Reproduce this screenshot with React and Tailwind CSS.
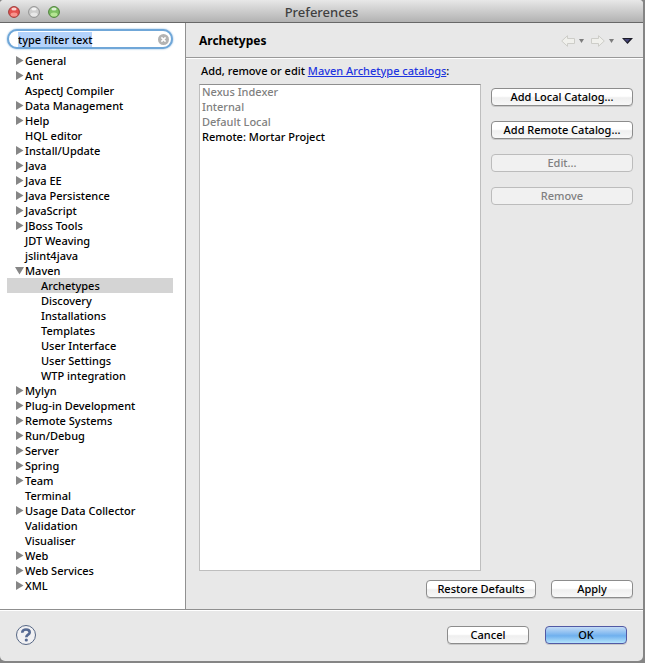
import React, { useEffect, useRef, useState } from "react";

const treeItems = [
    { label: "General", expandable: true },
    { label: "Ant", expandable: true },
    { label: "AspectJ Compiler" },
    { label: "Data Management", expandable: true },
    { label: "Help", expandable: true },
    { label: "HQL editor" },
    { label: "Install/Update", expandable: true },
    { label: "Java", expandable: true },
    { label: "Java EE", expandable: true },
    { label: "Java Persistence", expandable: true },
    { label: "JavaScript", expandable: true },
    { label: "JBoss Tools", expandable: true },
    { label: "JDT Weaving" },
    { label: "jslint4java" },
    {
        label: "Maven",
        expandable: true,
        children: [
            "Archetypes",
            "Discovery",
            "Installations",
            "Templates",
            "User Interface",
            "User Settings",
            "WTP integration",
        ],
    },
    { label: "Mylyn", expandable: true },
    { label: "Plug-in Development", expandable: true },
    { label: "Remote Systems", expandable: true },
    { label: "Run/Debug", expandable: true },
    { label: "Server", expandable: true },
    { label: "Spring", expandable: true },
    { label: "Team", expandable: true },
    { label: "Terminal" },
    { label: "Usage Data Collector", expandable: true },
    { label: "Validation" },
    { label: "Visualiser" },
    { label: "Web", expandable: true },
    { label: "Web Services", expandable: true },
    { label: "XML", expandable: true },
];

const catalogs = [
    { name: "Nexus Indexer", builtIn: true },
    { name: "Internal", builtIn: true },
    { name: "Default Local", builtIn: true },
    { name: "Remote: Mortar Project" },
];

const PushButton = ({ children, className = "", disabled, primary }) => {
    let look = "border-[#8c8c8c] bg-linear-to-b from-white from-45% via-[#efefef] via-55% to-[#f8f8f8] text-black shadow-[0_1px_0_#c9c9c9]";
    if (disabled) look = "border-[#bcbcbc] bg-[#f1f1f1] text-[#808080]";
    if (primary) look = "border-[#5259a4] bg-linear-to-b from-[#c3dbf5] via-[#6fb0ee] via-55% to-[#b5e4fb] text-black shadow-[0_1px_0_#c9c9c9]";

    return (
        <button
            type="button"
            disabled={disabled}
            className={`h-[18px] rounded-[4px] border text-center leading-4 ${look} ${className}`}
        >
            {children}
        </button>
    );
};

const TrafficLight = ({ label, rim, fill, shine }) => (
    <button type="button" aria-label={label} className="block">
        <svg width="12" height="12" viewBox="0 0 12 12">
            <circle cx="6" cy="6" r="5.4" fill={fill} stroke={rim} strokeWidth="1" />
            <ellipse cx="6" cy="8.6" rx="3.4" ry="2" fill={shine} opacity="0.7" />
            <ellipse cx="6" cy="3" rx="2.6" ry="1.5" fill="#fff" opacity="0.75" />
        </svg>
    </button>
);

const Disclosure = ({ open }) => (
    <svg width="9" height="9" viewBox="0 0 9 9" fill="#868686" className="shrink-0">
        {open ? <path d="M0 1h9L4.5 8.5z" /> : <path d="M1 0v9L8.5 4.5z" />}
    </svg>
);

const HistoryArrow = ({ forward }) => (
    <svg width="14" height="12" viewBox="0 0 14 12" fill="#f0f0ec" stroke="#cdcdc8">
        {forward ? (
            <path d="M.5 3.5h7V.7L13.3 6l-5.8 5.3V8.5h-7z" />
        ) : (
            <path d="M13.5 3.5h-7V.7L.7 6l5.8 5.3V8.5h7z" />
        )}
    </svg>
);

const SmallCaret = () => (
    <svg width="5" height="4" viewBox="0 0 5 4" fill="#7d7d7d">
        <path d="M0 0h5L2.5 4z" />
    </svg>
);

const App = () => {
    const [filter, setFilter] = useState("type filter text");
    const [selected, setSelected] = useState("Archetypes");
    const [mavenOpen, setMavenOpen] = useState(true);
    const filterRef = useRef(null);

    useEffect(() => {
        filterRef.current.focus();
        filterRef.current.select();
    }, []);

    return (
        <div className="flex min-h-screen flex-col bg-[#858585] pr-0.5 pb-0.5 font-['Noto_Sans',sans-serif] text-[11px] leading-[15px] font-medium text-black">
            <div className="flex flex-1 flex-col overflow-hidden rounded-t-[4px] rounded-b-[5px] bg-[#e8e8e8]">
                {/* Title bar */}
                <header className="grid h-[23px] grid-cols-[1fr_auto_1fr] items-center border-b border-[#686868] bg-linear-to-b from-[#e8e8e8] to-[#b2b2b2] px-2 pt-0.5">
                    <div className="flex gap-2">
                        <TrafficLight label="Close" rim="#9c3a38" fill="#e4504d" shine="#ffb0a8" />
                        <TrafficLight label="Minimize" rim="#929292" fill="#cfcfcf" shine="#f2f2f2" />
                        <TrafficLight label="Zoom" rim="#4c8038" fill="#7dbf62" shine="#cdf5a8" />
                    </div>
                    <h1 className="text-[13px] text-[#404040]">Preferences</h1>
                </header>

                <div className="flex flex-1">
                    {/* Page tree */}
                    <nav className="w-[186px] shrink-0 border-r border-[#919191] bg-white pt-1.5 pr-3 pb-4 pl-[7px]">
                        <div className="mb-1 flex h-5 items-center rounded-full border-2 border-[#70a7d8] bg-white pr-0.5 pl-[9px] shadow-[0_0_2px_#70a7d8]">
                            <input
                                ref={filterRef}
                                type="text"
                                aria-label="Filter"
                                value={filter}
                                onChange={(e) => setFilter(e.target.value)}
                                className="min-w-0 flex-1 outline-none selection:bg-[#b4d3fb] selection:text-black"
                            />
                            <button type="button" aria-label="Clear filter" onClick={() => setFilter("")}>
                                <svg width="11" height="11" viewBox="0 0 11 11">
                                    <circle cx="5.5" cy="5.5" r="5.5" fill="#b3b3b3" />
                                    <path d="M3.4 3.4l4.2 4.2M7.6 3.4L3.4 7.6" stroke="#fff" strokeWidth="1.5" />
                                </svg>
                            </button>
                        </div>

                        <ul>
                            {treeItems.map((item) => (
                                <li key={item.label}>
                                    <button
                                        type="button"
                                        onClick={() => (item.children ? setMavenOpen(!mavenOpen) : setSelected(item.label))}
                                        className={`flex h-[15px] w-full items-center pl-2 text-left ${selected === item.label ? "bg-[#d4d4d4]" : ""}`}
                                    >
                                        <span className="flex w-2.5 shrink-0">
                                            {item.expandable && <Disclosure open={item.children && mavenOpen} />}
                                        </span>
                                        {item.label}
                                    </button>
                                    {item.children && mavenOpen && (
                                        <ul>
                                            {item.children.map((child) => (
                                                <li key={child}>
                                                    <button
                                                        type="button"
                                                        onClick={() => setSelected(child)}
                                                        className={`block h-[15px] w-full pl-[34px] text-left ${selected === child ? "bg-[#d4d4d4]" : ""}`}
                                                    >
                                                        {child}
                                                    </button>
                                                </li>
                                            ))}
                                        </ul>
                                    )}
                                </li>
                            ))}
                        </ul>
                    </nav>

                    {/* Archetypes page */}
                    <main className="flex min-w-0 flex-1 flex-col">
                        <div className="flex h-9 items-center justify-between border-b border-white pr-2.5 pl-[13px] shadow-[inset_0_-1px_0_#999]">
                            <h2 className="text-[12px] font-bold">Archetypes</h2>
                            <div className="flex items-center">
                                <button type="button" aria-label="Back" disabled className="mr-1">
                                    <HistoryArrow />
                                </button>
                                <button type="button" aria-label="Back history" disabled className="mr-[7px]">
                                    <SmallCaret />
                                </button>
                                <button type="button" aria-label="Forward" disabled className="mr-1">
                                    <HistoryArrow forward />
                                </button>
                                <button type="button" aria-label="Forward history" disabled className="mr-2">
                                    <SmallCaret />
                                </button>
                                <button type="button" aria-label="Menu">
                                    <svg width="11" height="6" viewBox="0 0 11 6">
                                        <path d="M0 0h11L5.5 6z" fill="#1c1c28" />
                                        <path d="M2 1h6L5.3 4.2z" fill="#45457a" />
                                    </svg>
                                </button>
                            </div>
                        </div>

                        <div className="flex flex-1 flex-col pt-1 pr-2.5 pb-[11px] pl-[13px]">
                            <p className="pl-0.5">
                                Add, remove or edit{" "}
                                <a href="#catalogs" className="text-[#1f35e0] underline">
                                    Maven Archetype catalogs
                                </a>
                                :
                            </p>
                            <div className="mt-1.5 flex flex-1 gap-2.5">
                                <ul className="min-w-0 flex-1 border border-[#bebebe] border-t-[#8e8e8e] bg-white pl-0.5">
                                    {catalogs.map((catalog) => (
                                        <li
                                            key={catalog.name}
                                            className={`h-[15px] leading-[13px] ${catalog.builtIn ? "text-[#808080]" : ""}`}
                                        >
                                            {catalog.name}
                                        </li>
                                    ))}
                                </ul>
                                <div className="flex w-[142px] shrink-0 flex-col gap-[15px] pt-1">
                                    <PushButton>Add Local Catalog...</PushButton>
                                    <PushButton>Add Remote Catalog...</PushButton>
                                    <PushButton disabled>Edit...</PushButton>
                                    <PushButton disabled>Remove</PushButton>
                                </div>
                            </div>
                            <div className="mt-[9px] flex justify-end gap-[15px]">
                                <PushButton className="w-[110px]">Restore Defaults</PushButton>
                                <PushButton className="w-[82px]">Apply</PushButton>
                            </div>
                        </div>
                    </main>
                </div>

                <footer className="flex h-[52px] items-center justify-between border-t border-[#8f8f8f] px-4 pb-0.5 shadow-[inset_0_1px_0_#fff]">
                    <button type="button" aria-label="Help">
                        <svg width="20" height="20" viewBox="0 0 20 20" fill="none">
                            <circle cx="10" cy="10" r="9.5" fill="#f1f1f3" stroke="#566684" />
                            <path d="M6.2 7.8C6.2 5.3 7.9 4.5 10 4.5s3.7 1 3.7 2.9c0 2.3-3.4 2.2-3.4 4.8" stroke="#566a93" strokeWidth="2.6" />
                            <circle cx="10.3" cy="15" r="1.6" fill="#566a93" />
                        </svg>
                    </button>
                    <div className="flex gap-4">
                        <PushButton className="w-[82px]">Cancel</PushButton>
                        <PushButton primary className="w-[82px]">OK</PushButton>
                    </div>
                </footer>
            </div>
        </div>
    );
};

export default App;
